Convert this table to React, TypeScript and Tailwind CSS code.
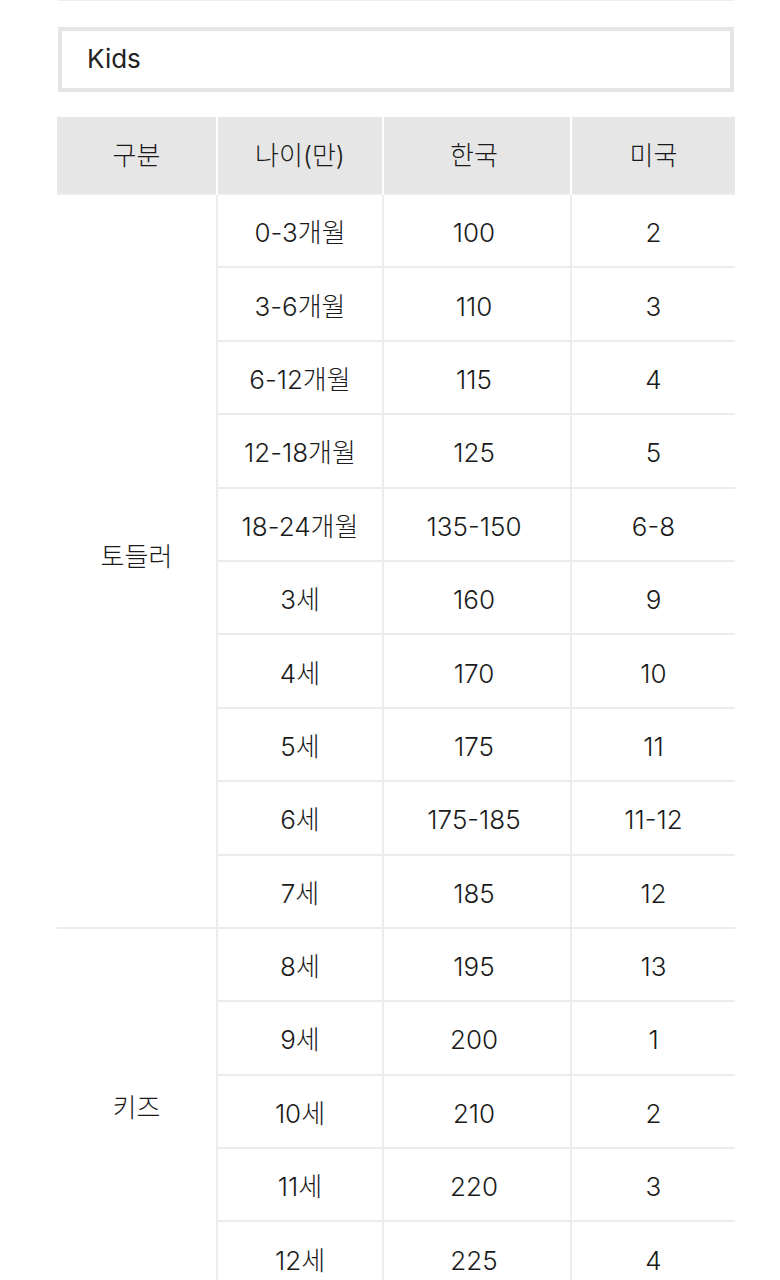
const toddler = [
  ["0-3개월", "100", "2"],
  ["3-6개월", "110", "3"],
  ["6-12개월", "115", "4"],
  ["12-18개월", "125", "5"],
  ["18-24개월", "135-150", "6-8"],
  ["3세", "160", "9"],
  ["4세", "170", "10"],
  ["5세", "175", "11"],
  ["6세", "175-185", "11-12"],
  ["7세", "185", "12"],
];

const kids = [
  ["8세", "195", "13"],
  ["9세", "200", "1"],
  ["10세", "210", "2"],
  ["11세", "220", "3"],
  ["12세", "225", "4"],
];

const font = { fontFamily: 'Inter, "Noto Sans CJK KR", sans-serif' };

function Group({ label, rows }: { label: string; rows: string[][] }) {
  return (
    <>
      {rows.map((r, i) => (
        <tr key={r[0]} className="h-[73.4px]">
          {i === 0 && (
            <td
              rowSpan={rows.length}
              className="border-2 border-l-0 border-[#ececec] text-center align-middle pb-[8px]"
            >
              {label}
            </td>
          )}
          <td className="border-2 border-[#ececec] text-center pt-[4px]">{r[0]}</td>
          <td className="border-2 border-[#ececec] text-center pt-[4px] pr-[6px]">{r[1]}</td>
          <td className="border-2 border-r-0 border-[#ececec] text-center pt-[4px]">{r[2]}</td>
        </tr>
      ))}
    </>
  );
}

export default function App() {
  return (
    <div className="bg-white min-h-[1280px] overflow-hidden pl-[57px]" style={font}>
      <div className="w-[676px] h-px bg-[#eeeeee] ml-px" />
      <div className="mt-[26px] ml-px w-[676px] h-[65px] border-4 border-[#e6e6e6] flex items-center pl-[25px] pb-[2px]">
        <span className="text-[26px] text-[#222]">Kids</span>
      </div>
      <table className="mt-[25px] w-[678px] table-fixed border-collapse text-[26px] font-light text-[#1a1a1a]">
        <colgroup>
          <col className="w-[160px]" />
          <col className="w-[166px]" />
          <col className="w-[188px]" />
          <col />
        </colgroup>
        <thead>
          <tr className="h-[77px] bg-[#e6e6e6]">
            <th className="font-light border-x-2 border-l-0 border-white">구분</th>
            <th className="font-light border-x-2 border-white">나이(만)</th>
            <th className="font-light border-x-2 border-white pr-[6px]">한국</th>
            <th className="font-light border-x-2 border-r-0 border-white">미국</th>
          </tr>
        </thead>
        <tbody>
          <Group label="토들러" rows={toddler} />
          <Group label="키즈" rows={kids} />
        </tbody>
      </table>
    </div>
  );
}
